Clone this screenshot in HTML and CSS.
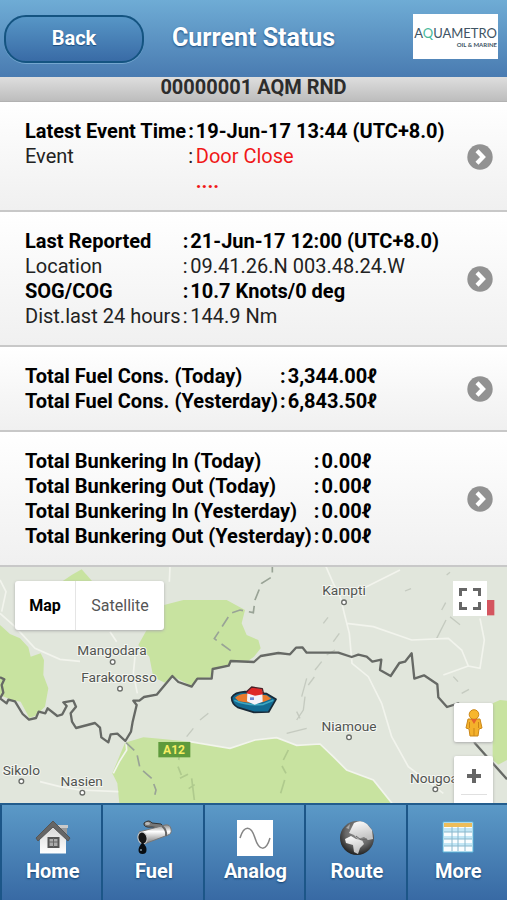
FILE: index.html
```html
<!DOCTYPE html>
<html lang="en">
<head>
<meta charset="utf-8">
<meta name="viewport" content="width=device-width, initial-scale=1">
<title>Current Status</title>
<link rel="stylesheet" href="styles.css">
</head>
<body>
<svg class="defs" width="0" height="0" aria-hidden="true">
  <symbol id="chevron" viewBox="0 0 26 26">
    <circle cx="13" cy="13" r="12.7" fill="#929292"/>
    <path d="M10 6.8l6 6.2-6 6.2" fill="none" stroke="#fff" stroke-width="4.2"/>
  </symbol>
</svg>

<header class="header">
  <button class="back" type="button">Back</button>
  <h1 class="title">Current Status</h1>
  <div class="brand"><span class="brand-name">A<span class="brand-q">Q</span>UAMETRO</span><span class="brand-sub">OIL &amp; MARINE</span></div>
</header>

<h2 class="vessel">00000001 AQM RND</h2>

<main class="main">
  <section class="card">
    <table class="data">
      <tr class="strong"><th>Latest Event Time</th><td>:</td><td>19-Jun-17 13:44 (UTC+8.0)</td></tr>
      <tr><th>Event</th><td>:</td><td class="alert">Door Close</td></tr>
      <tr class="strong"><th></th><td></td><td class="alert">....</td></tr>
    </table>
    <a class="more" href="#event" aria-label="Event details"><svg><use href="#chevron"/></svg></a>
  </section>

  <section class="card">
    <table class="data">
      <tr class="strong"><th>Last Reported</th><td>:</td><td>21-Jun-17 12:00 (UTC+8.0)</td></tr>
      <tr><th>Location</th><td>:</td><td>09.41.26.N 003.48.24.W</td></tr>
      <tr class="strong"><th>SOG/COG</th><td>:</td><td>10.7 Knots/0 deg</td></tr>
      <tr><th>Dist.last 24 hours</th><td>:</td><td>144.9 Nm</td></tr>
    </table>
    <a class="more" href="#position" aria-label="Position details"><svg><use href="#chevron"/></svg></a>
  </section>

  <section class="card">
    <table class="data">
      <tr class="strong"><th>Total Fuel Cons. (Today)</th><td>:</td><td>3,344.00ℓ</td></tr>
      <tr class="strong"><th>Total Fuel Cons. (Yesterday)</th><td>:</td><td>6,843.50ℓ</td></tr>
    </table>
    <a class="more" href="#fuel-total" aria-label="Fuel details"><svg><use href="#chevron"/></svg></a>
  </section>

  <section class="card">
    <table class="data">
      <tr class="strong"><th>Total Bunkering In (Today)</th><td>:</td><td>0.00ℓ</td></tr>
      <tr class="strong"><th>Total Bunkering Out (Today)</th><td>:</td><td>0.00ℓ</td></tr>
      <tr class="strong"><th>Total Bunkering In (Yesterday)</th><td>:</td><td>0.00ℓ</td></tr>
      <tr class="strong"><th>Total Bunkering Out (Yesterday)</th><td>:</td><td>0.00ℓ</td></tr>
    </table>
    <a class="more" href="#bunkering" aria-label="Bunkering details"><svg><use href="#chevron"/></svg></a>
  </section>

  <section class="map" aria-label="Map">
    <svg class="map-canvas" viewBox="0 21 1521 708" preserveAspectRatio="xMidYMid slice">
      <rect y="0" width="1521" height="760" fill="#e1e6dc"/>
      <!-- reserves -->
      <g fill="#c8e3a0">
        <path d="M0 195L30 222 60 235 85 262 92 290 122 280 132 300 130 345 145 385 135 440 105 468 88 474 62 425 35 420 0 405Z"/>
        <path d="M185 65L215 45 245 28 278 65Z"/>
        <path d="M492 135L550 120 680 120 735 150 725 190 740 225 775 240 782 265 762 290 745 302 695 302 685 315 637 327 635 352 592 355 575 378 517 348 495 368 460 352 448 290 415 255 440 210 492 190Z"/>
        <path d="M375 548L430 532 480 536 600 548 690 565 765 540 830 533 890 556 960 552 1000 590 1040 630 1120 660 1176 730 358 730 352 670 337 640Z"/>
        <path d="M1478 430L1500 420 1521 422 1521 600 1495 614 1478 600Z"/>
      </g>
      <!-- terrain -->
      <g fill="none" stroke="#b5bbb1" stroke-width="4" opacity=".65">
        <path d="M890 480l20-30 5-40M905 410l15-55M945 330l20-25M860 520l60-15M890 455l10 20M1000 245l18-25M970 190l14-18M1310 235l28-55M1325 150l12-22M1385 400l22-12M1360 350l14 15M600 480l25-20M560 530l20-25M1215 93l18-7M1340 45l10-8M980 285l25-15M925 375l18-24M1350 170l30 24"/>
      </g>
      <g fill="none" stroke="#9fb981" stroke-width="5" opacity=".6">
        <path d="M536 600l8-45M540 655l24-12M566 686l18-12M534 620l10 25M575 655l8 65M842 700l12-40M858 640l-12-22M850 600l15-30"/>
      </g>
      <!-- roads -->
      <g fill="none" stroke="#f2f4ed" stroke-width="5">
        <path d="M0 160L45 200 105 265 180 298 240 304M330 215L350 245M405 290L400 340 412 400M510 20L508 65M0 60L18 95 5 155M340 640L358 605 380 570 378 545M120 665L180 680 240 690 355 695"/>
        <path d="M978 20L1000 70 1022 115 1034 165 1048 220 1056 310 1105 350 1145 430 1175 530 1225 620 1330 700M1040 190L1120 200 1235 240 1345 235 1385 270 1405 318 1440 325 1453 240 1440 175M1405 318L1330 345M1080 90L1200 30"/>
        <path d="M570 545L690 565 765 540 830 533 890 556 960 552 1000 590 1040 630 1120 660 1176 730"/>
      </g>
      <!-- regional limits -->
      <g fill="none" stroke="#99a396" stroke-width="5" stroke-dasharray="34 18">
        <path d="M692 272L643 236 692 160 720 150 760 158 765 120 785 70 817 50V20"/>
        <path d="M378 548L410 578 420 625 455 655 468 690 462 715"/>
      </g>
      <!-- country border -->
      <g fill="none" stroke="#666965" stroke-width="7" stroke-linejoin="round">
        <path d="M0 352L13 358 5 375 10 398 0 415 20 430 25 419 45 424 68 462 87 479 108 474 116 455 136 460 143 445 172 468 187 463 200 438 190 427 220 422 228 440 212 460 216 485 228 504 285 489 300 503 304 532 325 547 332 523 352 521 376 543 393 515 398 485 410 435 400 422 418 422 432 411 470 404 517 348 535 366 575 380 592 356 635 356 638 327 686 317 692 303 762 306 782 288 835 279 870 283 888 263 907 262 920 278 1015 278 1055 291 1075 284 1100 290 1117 305 1144 299 1140 330 1172 348 1198 309 1215 305 1235 280 1243 356 1272 346 1312 373 1315 412 1341 441 1375 430 1410 500 1425 550 1521 658"/>
      </g>
      <g class="map-badge">
        <rect x="475" y="546" width="96" height="46" fill="#5e9a3c"/>
        <text x="522" y="582">A12</text>
      </g>
      <g class="map-towns">
        <text x="336" y="286">Mangodara</text>
        <text x="357" y="366">Farakorosso</text>
        <text x="64" y="645">Sikolo</text>
        <text x="245" y="679">Nasien</text>
        <text x="1032" y="106">Kampti</text>
        <text x="1047" y="512">Niamoue</text>
        <text x="1302" y="669">Nougoa</text>
      </g>
      <g fill="#fff" stroke="#696c68" stroke-width="4">
        <circle cx="338" cy="306" r="7"/><circle cx="360" cy="386" r="7"/><circle cx="64" cy="664" r="7"/><circle cx="247" cy="698" r="7"/><circle cx="1032" cy="127" r="7"/><circle cx="1047" cy="532" r="7"/><circle cx="1306" cy="688" r="7"/>
      </g>
      <rect x="1461" y="120" width="22" height="46" fill="#d4555f"/>
      <!-- vessel -->
      <g stroke-linejoin="round">
        <path d="M695 412Q704 397 735 395L800 401 828 418 806 456 762 457 713 442Q694 430 695 412Z" fill="#126b93" stroke="#182937" stroke-width="5"/>
        <path d="M705 413Q718 400 742 401L800 406 814 416 790 426 757 430 716 424Z" fill="#e97a2c"/>
        <path d="M703 421Q740 438 790 433L820 421" fill="none" stroke="#3fa7c1" stroke-width="5"/>
        <path d="M742 399L762 404 787 400 788 425 764 434 741 424Z" fill="#f3f2fa"/>
        <path d="M738 399L755 381 785 386 790 403 765 407Z" fill="#df2828"/>
        <path d="M738 397L755 381 787 386 791 403" fill="none" stroke="#4a2026" stroke-width="4"/>
        <path d="M750 416h12" stroke="#7086d0" stroke-width="8"/>
      </g>
    </svg>
    <div class="map-type">
      <button class="map-type-on" type="button">Map</button>
      <button class="map-type-off" type="button">Satellite</button>
    </div>
    <button class="map-full" type="button" aria-label="Full screen">
      <svg viewBox="0 0 22 22"><path d="M1.500 8V1.500H8M14 1.500h6.500V8M20.500 14v6.500H14M8 20.500H1.500V14" fill="none" stroke="#666" stroke-width="3"/></svg>
    </button>
    <div class="map-tools">
      <button class="map-tool" type="button" aria-label="Street view">
        <svg viewBox="0 0 18 28"><path d="M3 10h12l2 9-3 1-1 7H5l-1-7-3-1Z" fill="#f4b12b" stroke="#cb8718"/><circle cx="9" cy="5.500" r="4.800" fill="#f7b62d" stroke="#cb8718"/><path d="M6 10l3 5 3-5Z" fill="#e5642d"/><path d="M9 19v8M4.500 13v6M13.500 13v6" stroke="#cb8718"/></svg>
      </button>
      <button class="map-zoom" type="button" aria-label="Zoom in">
        <svg viewBox="0 0 16 16"><path d="M8 1v14M1 8h14" stroke="#666" stroke-width="4"/></svg>
      </button>
    </div>
  </section>
</main>

<nav class="nav">
  <a href="#home">
    <svg viewBox="0 0 36 36">
      <defs>
        <linearGradient id="wall" x2="0" y2="1"><stop stop-color="#d3d3d3"/><stop offset="1" stop-color="#fff"/></linearGradient>
        <linearGradient id="pipe" x2="0" y2="1"><stop stop-color="#8a8a8a"/><stop offset=".35" stop-color="#fff"/><stop offset="1" stop-color="#777"/></linearGradient>
        <radialGradient id="globe" cx=".55" cy=".35" r=".65"><stop stop-color="#999"/><stop offset=".6" stop-color="#666"/><stop offset="1" stop-color="#222"/></radialGradient>
        <linearGradient id="land" x2=".3" y2="1"><stop stop-color="#fff"/><stop offset="1" stop-color="#c4c4c4"/></linearGradient>
      </defs>
      <path d="M24 6h8v11l-8-6Z" fill="#999"/><path d="M23 5h10v3H23Z" fill="#c9c9c9"/>
      <path d="M5 17L18 4l13 13v16.500H5Z" fill="url(#wall)"/>
      <path d="M18 1L35 18l-2 3L18 7 3 21l-2-3Z" fill="#666" stroke="#555"/>
      <path d="M13.500 18h10v9h-10Z" fill="#aaa" stroke="#555" stroke-width="2"/><path d="M18.500 18v9M14 22h9" stroke="#666"/>
    </svg>
    <span>Home</span>
  </a>
  <a href="#fuel">
    <svg viewBox="0 0 36 36">
      <path d="M17 6l2 7h5l1-6Z" fill="#555"/>
      <path d="M8 3q5-4 8 0l9 1q4 3-1 4l-8-1q-9 1-8-4Z" fill="#777" stroke="#333"/><ellipse cx="11.500" cy="3.500" rx="2.500" ry="1.500" fill="#bbb"/>
      <path d="M3 12L29 5q5-1 6 4t-3 6L8 24Z" fill="url(#pipe)" stroke="#777"/>
      <path d="M26 6q5 4 4 10" fill="none" stroke="#666" stroke-width="2"/>
      <ellipse cx="6.500" cy="18" rx="4.500" ry="6" transform="rotate(-15 6.500 18)" fill="#151515" stroke="#ccc"/>
      <path d="M6.500 22Q11 27 10.500 30a4 4 0 0 1-8 0Q2.500 27 6.500 22Z" fill="#080d12"/><circle cx="5" cy="30" r="1" fill="#8295a0"/>
    </svg>
    <span>Fuel</span>
  </a>
  <a href="#analog">
    <svg viewBox="0 0 36 36"><path d="M0 0h36v36H0Z" fill="#fff"/><path d="M3 18C7 5 14 5 18 18S29 32 33 18" fill="none" stroke="#858585" stroke-width="1.500"/></svg>
    <span>Analog</span>
  </a>
  <a href="#route">
    <svg viewBox="0 0 36 36">
      <circle cx="18" cy="18" r="17" fill="url(#globe)"/>
      <path d="M15 3q7-4 13 1l5 6 1 9-5 1-4-3-6 2-4-4-5-2 3-6Z" fill="url(#land)"/>
      <path d="M6 19l6-3 5 3 6 1 2 4-4 4-2 6-4-2-1-7-7-2Z" fill="url(#land)"/>
      <path d="M17 16l5 4 6-1" fill="none" stroke="#666"/>
      <path d="M7 8l4-4-1 5Z" fill="#aaa"/>
    </svg>
    <span>Route</span>
  </a>
  <a href="#more">
    <svg viewBox="0 0 36 36">
      <path d="M3 2h30v30H3Z" fill="#f9fdff" stroke="#5bb5d9"/><path d="M4 8h28v4H4ZM4 16h28v3H4ZM4 23h28v3H4Z" fill="#c3e7f6"/><path d="M4 3h28v4H4Z" fill="#edbd59"/>
      <path d="M12 7v24M18 7v24M25 7v24M4 12h28M4 19h28M4 26h28" stroke="#8ab8cd"/>
    </svg>
    <span>More</span>
  </a>
</nav>
</body>
</html>
```
FILE: styles.css
```css
* { box-sizing: border-box; }

body {
  margin: 0;
  min-height: 100vh;
  display: flex;
  flex-direction: column;
  background: #eee;
  color: #000;
  font-family: Roboto, "Liberation Sans", sans-serif;
  font-size: 20px;
  line-height: 25px;
}

button {
  padding: 0;
  border: 0;
  background: #fff;
  font: inherit;
}

.defs { position: absolute; }

.header {
  display: grid;
  grid-template-columns: 140px 1fr 85px;
  align-items: center;
  height: 77px;
  padding: 0 9px 4px 4px;
  background: linear-gradient(#6facd5, #497bb1);
}

.back {
  height: 48px;
  margin-top: 4px;
  border: 2px solid #145481;
  border-radius: 22px;
  background: linear-gradient(#5796c6, #396ba6);
  box-shadow: 0 1px 0 #74a6cf;
  color: #fff;
  font-weight: 700;
  text-shadow: 0 1px 1px #194b7e;
}

.title {
  margin: 0;
  padding-top: 2px;
  padding-left: 28px;
  color: #fff;
  font-size: 25px;
  line-height: 32px;
  white-space: nowrap;
  text-shadow: 0 1px 2px #194b7e;
}

.brand {
  display: flex;
  flex-direction: column;
  justify-content: center;
  align-items: flex-end;
  height: 45px;
  padding-right: 1px;
  background: #fff;
  color: #405464;
  font-family: Lato, sans-serif;
  font-size: 13px;
  line-height: 16px;
}

.brand-q { color: #48b99c; }

.brand-sub {
  font-size: 6px;
  font-weight: 700;
  line-height: 8px;
}

.vessel {
  margin: 0;
  height: 25px;
  border-bottom: 1px solid #b2b2b2;
  background: linear-gradient(#dedede, #bdbdbd);
  color: #2d2d2d;
  font-size: 20px;
  font-weight: 700;
  line-height: 20px;
  text-align: center;
}

.main {
  flex: 1;
  display: flex;
  flex-direction: column;
}

.card {
  display: flex;
  justify-content: space-between;
  align-items: center;
  padding: 17px 14px 16px 25px;
  border-bottom: 2px solid #c8c8c8;
  background: linear-gradient(#fff, #f0f0f0);
}

.data { border-collapse: collapse; }

.data th,
.data td {
  height: 25px;
  padding: 0 0 0 2px;
  font-weight: 400;
  text-align: left;
  white-space: nowrap;
  color: #222;
}

.data th { padding-left: 0; }

.data .strong th,
.data .strong td {
  color: #000;
  font-weight: 700;
}

.data td.alert,
.data .strong td.alert { color: #f01818; }

.more,
.more svg {
  display: block;
  width: 26px;
  height: 26px;
}

.map {
  position: relative;
  flex: 1;
  min-height: 236px;
  overflow: hidden;
}

.map-canvas {
  position: absolute;
  inset: 0;
  width: 100%;
  height: 100%;
}

.map-towns text {
  fill: #505350;
  stroke: #f4f6f1;
  stroke-width: 6px;
  paint-order: stroke;
  font-size: 41px;
  text-anchor: middle;
}

.map-badge text {
  fill: #f7ee64;
  font-size: 36px;
  font-weight: 700;
  text-anchor: middle;
}

.map-type {
  position: absolute;
  top: 14px;
  left: 15px;
  display: flex;
  height: 49px;
  border-radius: 3px;
  background: #fff;
  box-shadow: 0 1px 3px #aaa;
  font-size: 16px;
}

.map-type button { background: none; }

.map-type .map-type-on {
  width: 61px;
  border-right: 1px solid #e5e5e5;
  font-weight: 700;
}

.map-type .map-type-off {
  width: 88px;
  color: #555;
}

.map-full {
  position: absolute;
  top: 14px;
  right: 20px;
  display: grid;
  place-items: center;
  width: 34px;
  height: 35px;
}

.map-full svg {
  width: 22px;
  height: 22px;
}

.map-tools {
  position: absolute;
  top: 136px;
  right: 14px;
  display: grid;
  gap: 14px;
}

.map-tool,
.map-zoom {
  display: flex;
  justify-content: center;
  width: 39px;
  height: 39px;
  border-radius: 2px;
  box-shadow: 0 1px 3px #aaa;
}

.map-tool { align-items: center; }

.map-tool svg {
  width: 18px;
  height: 28px;
}

.map-zoom {
  height: 78px;
  padding-top: 12px;
  background: linear-gradient(#e0e0e0, #e0e0e0) center 38px / 26px 1px no-repeat #fff;
}

.map-zoom svg {
  width: 16px;
  height: 16px;
}

.nav {
  display: grid;
  grid-template-columns: repeat(5, 1fr);
  height: 97px;
  border-top: 2px solid #235d8d;
  background: linear-gradient(#5b99c7, #386aa4);
}

.nav a {
  display: flex;
  flex-direction: column;
  align-items: center;
  gap: 3px;
  padding-top: 15px;
  padding-left: 2px;
  border-left: 2px solid #1c5688;
  color: #fff;
  font-weight: 700;
  text-decoration: none;
  text-shadow: 0 1px 2px #12406f;
}

.nav svg {
  width: 36px;
  height: 36px;
}
```
